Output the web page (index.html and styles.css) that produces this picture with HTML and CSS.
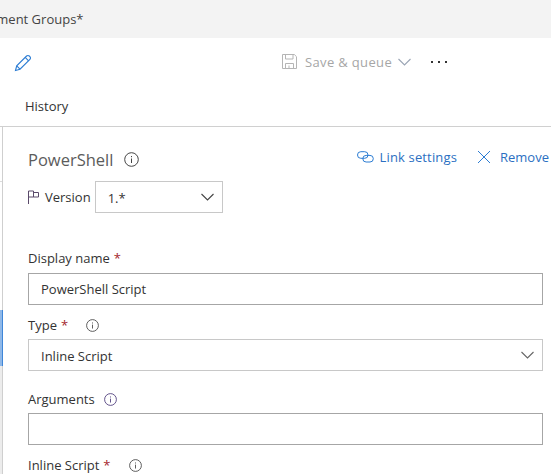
FILE: index.html
```html
<!DOCTYPE html>
<html>
<head>
  <title>PowerShell task</title>
  <link rel="stylesheet" href="styles.css">
</head>
<body>

  <div class="topbar"><span class="crumb">Deployment Groups*</span></div>

  <div class="toolbar">
    <svg class="pencil" width="18" height="18" viewBox="0 0 18 18" fill="none" stroke="#2b7cd3" stroke-width="1.1">
      <path d="M1.5 16.5l1.2-4.6L12.6 2a1.9 1.9 0 0 1 2.7 0l.6.6a1.9 1.9 0 0 1 0 2.7L6 15.2z"/>
      <path d="M2.7 11.9l3.3 3.3M11.2 3.4l3.4 3.4"/>
    </svg>
    <div class="actions">
      <svg width="15" height="15" viewBox="0 0 15 15" fill="none" stroke="#b5b5b5">
        <path d="M.5.5h11.8l2.2 2.200v11.800H.5z"/>
        <path d="M3.500.5v4.500h7.500V.5M3.500 14.500V9.500h8v5M7 11.500v3"/>
      </svg>
      <span class="save">Save &amp; queue</span>
      <svg class="save-chev" width="13" height="8" viewBox="0 0 13 8" fill="none" stroke="#9aa5b5" stroke-width="1.1"><path d="M.5 1l6 6 6-6"/></svg>
      <span class="more"><i></i><i></i><i></i></span>
    </div>
  </div>

  <div class="tabs"><span>History</span></div>

  <div class="main">
    <div class="rail"><div class="rail-stub"></div><div class="rail-active"></div><div class="rail-rest"></div></div>

    <div class="panel">
      <div class="head">
        <div class="title">
          <h2>PowerShell</h2>
          <svg class="info" width="15" height="15" viewBox="0 0 15 15" fill="none" stroke="#444"><circle cx="7.5" cy="7.5" r="6.8"/><path d="M7.5 6.500v4.500M7.500 4v1.200"/></svg>
        </div>
        <div class="links">
          <a class="link">
            <svg width="17" height="12" viewBox="0 0 17 12" fill="none" stroke="#2b7cd3"><rect x=".5" y=".7" width="10.5" height="6.6" rx="3.3"/><rect x="5.8" y="4.4" width="10.5" height="6.6" rx="3.3"/></svg>
            Link settings
          </a>
          <a class="unlink">
            <svg width="14" height="14" viewBox="0 0 14 14" fill="none" stroke="#2b7cd3"><path d="M1 1l12 12M13 1L1 13"/></svg>
            Remove
          </a>
        </div>
      </div>

      <div class="version">
        <svg width="11" height="14" viewBox="0 0 11 14" fill="none" stroke="#5a4a6a"><path d="M.5 14V1h5v6H.5M5.500 2.500h5v4.500h-5"/></svg>
        <span>Version</span>
        <div class="select select-small"><span>1.*</span>
          <svg width="13" height="8" viewBox="0 0 13 8" fill="none" stroke="#444" stroke-width="1.1"><path d="M.5 1l6 6 6-6"/></svg>
        </div>
      </div>

      <label class="label first">Display name <b>*</b></label>
      <div class="input">PowerShell Script</div>

      <label class="label near">Type <b>*</b>
        <svg class="info gap" width="13" height="13" viewBox="0 0 15 15" fill="none" stroke="#444"><circle cx="7.5" cy="7.5" r="6.8"/><path d="M7.500 6.500v4.500M7.500 4v1.200"/></svg>
      </label>
      <div class="select"><span>Inline Script</span>
        <svg width="13" height="8" viewBox="0 0 13 8" fill="none" stroke="#666" stroke-width="1.1"><path d="M.5 1l6 6 6-6"/></svg>
      </div>

      <label class="label">Arguments
        <svg class="info args" width="13" height="13" viewBox="0 0 15 15" fill="none" stroke="#4b3a7a"><circle cx="7.5" cy="7.5" r="6.8"/><path d="M7.500 6.500v4.500M7.500 4v1.200"/></svg>
      </label>
      <div class="input"></div>

      <label class="label near">Inline Script <b>*</b>
        <svg class="info gap" width="13" height="13" viewBox="0 0 15 15" fill="none" stroke="#444"><circle cx="7.5" cy="7.5" r="6.8"/><path d="M7.500 6.500v4.500M7.500 4v1.200"/></svg>
      </label>
    </div>
  </div>

</body>
</html>
```

FILE: styles.css
```css
html, body {
  height: 100%;
}
body {
  margin: 0;
  overflow: hidden;
  background: #fff;
  color: #333;
  font-family: "Open Sans", "Noto Sans", sans-serif;
  font-size: 13px;
}
svg {
  flex: none;
}
.topbar {
  height: 38px;
  background: #f3f3f3;
  display: flex;
  align-items: center;
  overflow: hidden;
}
.crumb {
  margin-left: -46px;
  color: #444;
}
.toolbar {
  height: 50px;
  display: flex;
  align-items: center;
  padding-left: 14px;
}
.actions {
  display: flex;
  align-items: center;
  margin-left: 250px;
  margin-top: -3px;
}
.save {
  color: #a6a6a6;
  margin-left: 8px;
  letter-spacing: .35px;
}
.save-chev {
  margin-left: 6px;
}
.more {
  display: flex;
  gap: 5px;
  margin-left: 20px;
  margin-top: 1px;
}
.more i {
  width: 2px;
  height: 2px;
  background: #333;
}
.tabs {
  height: 38px;
  padding-left: 25px;
  display: flex;
  align-items: center;
  border-bottom: 1px solid #d0d0d0;
}
.tabs span {
  margin-top: -2px;
}
.main {
  display: flex;
  height: 347px;
}
.rail {
  width: 2px;
  border-right: 1px solid #cfcfcf;
  display: flex;
  flex-direction: column;
}
.rail-stub {
  height: 1px;
  margin-top: 54px;
  background: #dcdcdc;
}
.rail-active {
  width: 2px;
  height: 56px;
  margin-top: 128px;
  background: #8fb8e8;
  border-right: 1px solid #3f86d8;
}
.rail-rest {
  flex: 1;
  background: #ececec;
}
.panel {
  flex: 1;
  padding: 0 8px 0 25px;
  min-width: 0;
}
.head {
  display: flex;
  justify-content: space-between;
  height: 54px;
  padding-top: 20px;
  box-sizing: border-box;
}
.title {
  display: flex;
  align-items: center;
  gap: 11px;
  height: 26px;
  margin-top: -1px;
}
h2 {
  margin: 0;
  font-size: 16.500px;
  font-weight: 400;
  color: #5c5c5c;
}
.links {
  display: flex;
  gap: 20px;
  margin-right: -6px;
  color: #2b6fc2;
  height: 20px;
  align-items: center;
}
.links a {
  display: flex;
  align-items: center;
  gap: 7px;
}
.links .link {
  gap: 6px;
  letter-spacing: .15px;
}
.links .unlink {
  gap: 9px;
}
.version {
  display: flex;
  align-items: center;
  gap: 6px;
}
.select, .input {
  height: 32px;
  box-sizing: border-box;
  border: 1px solid #a6a6a6;
  display: flex;
  align-items: center;
  padding: 0 12px;
}
.select {
  border-color: #c8c8c8;
  justify-content: space-between;
  padding-right: 8px;
}
.select span {
  margin-top: 1px;
}
.select-small {
  width: 128px;
  margin-left: -2px;
}
.select-small span {
  margin-top: 2px;
}
.label {
  display: flex;
  align-items: center;
  gap: 4px;
  height: 20px;
  margin: 18px 0 4px;
}
.label.first {
  margin: 35px 0 5px;
}
.label.near {
  margin-top: 10px;
}
.label b {
  font-weight: 400;
  color: #a4262c;
}
.info.gap {
  margin-left: 14px;
}
.info.args {
  margin-left: 5px;
}
```
